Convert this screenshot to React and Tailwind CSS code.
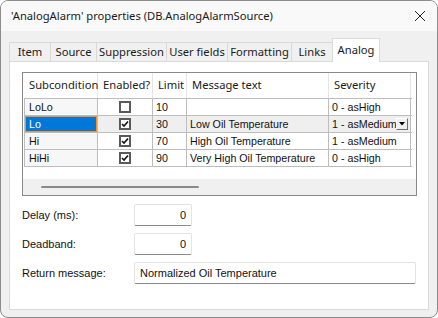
import React from 'react'

const UI = { fontFamily: '"Noto Sans", "Open Sans", sans-serif' }
const CLASSIC = { fontFamily: '"Liberation Sans", Arial, sans-serif' }

const TABS = [
  { label: 'Item', w: 'w-[41px]' },
  { label: 'Source', w: 'w-[46px]' },
  { label: 'Suppression', w: 'w-[70px]' },
  { label: 'User fields', w: 'w-[61px]' },
  { label: 'Formatting', w: 'w-[64px]' },
  { label: 'Links', w: 'w-[41px]' },
]

const COLS = [
  { key: 'sub', label: 'Subcondition', w: 'w-[74px]' },
  { key: 'en', label: 'Enabled?', w: 'w-[55px]' },
  { key: 'limit', label: 'Limit', w: 'w-[34px]' },
  { key: 'msg', label: 'Message text', w: 'w-[142px]' },
  { key: 'sev', label: 'Severity', w: 'w-[82px]' },
]

const ROWS = [
  { sub: 'LoLo', en: false, limit: '10', msg: '', sev: '0 - asHigh' },
  { sub: 'Lo', en: true, limit: '30', msg: 'Low Oil Temperature', sev: '1 - asMedium', current: true },
  { sub: 'Hi', en: true, limit: '70', msg: 'High Oil Temperature', sev: '1 - asMedium' },
  { sub: 'HiHi', en: true, limit: '90', msg: 'Very High Oil Temperature', sev: '0 - asHigh' },
]

function CheckBox({ checked }) {
  return (
    <div className="w-[12px] h-[12px] border-2 border-[#5a5a5a] bg-white flex items-center justify-center">
      {checked && (
        <svg width="8" height="8" viewBox="0 0 8 8">
          <path d="M1 4 L3 6 L7 1.5" stroke="#111" strokeWidth="1.6" fill="none" />
        </svg>
      )}
    </div>
  )
}

function Field({ label, value, wide, right }) {
  return (
    <div className="flex items-center h-[22px]">
      <div className="w-[112px] text-[11px] text-[#111]" style={CLASSIC}>{label}</div>
      <div
        className={`${wide ? 'w-[282px]' : 'w-[58px]'} h-[22px] bg-white border border-[#e3e3e3] border-b-[#8a8a8a] rounded-[2px] flex items-center px-[5px] text-[11px] text-[#111] ${right ? 'justify-end' : ''}`}
        style={CLASSIC}
      >
        {value}
      </div>
    </div>
  )
}

export default function App() {
  return (
    <div className="w-[438px] h-[318px] border border-[#8c8c8c] rounded-[8px] overflow-hidden bg-[#f0f0f0] flex flex-col">
      {/* Title bar */}
      <div className="h-[30px] bg-[#f9f9f9] flex items-center justify-between pl-[10px] pr-[10px] shrink-0" style={UI}>
        <span className="text-[11.2px] text-[#1a1a1a] whitespace-nowrap">'AnalogAlarm' properties (DB.AnalogAlarmSource)</span>
        <svg width="12" height="12" viewBox="0 0 12 12" className="mr-[1px]">
          <path d="M1 1 L11 11 M11 1 L1 11" stroke="#222" strokeWidth="1" />
        </svg>
      </div>

      {/* Tabs */}
      <div className="pl-[8px] pt-[7px] flex items-end h-[30px] shrink-0" style={UI}>
        {TABS.map(t => (
          <div
            key={t.label}
            className={`${t.w} h-[19px] border border-[#d9d9d9] border-r-0 border-b-0 bg-[#f0f0f0] flex items-center justify-center text-[11.2px] text-[#1a1a1a] whitespace-nowrap`}
          >
            {t.label}
          </div>
        ))}
        <div className="w-[48px] h-[24px] border border-[#d9d9d9] border-b-0 bg-white flex items-center justify-center text-[11.2px] text-[#1a1a1a] -mb-[1px] relative z-10">
          Analog
        </div>
      </div>

      {/* Panel */}
      <div className="ml-[8px] w-[420px] h-[249px] bg-white border border-[#d9d9d9] pl-[12px] pt-[10px]">
        {/* Grid */}
        <div className="w-[395px] h-[124px] border border-[#8a8a8a] bg-white flex flex-col">
          {/* Header */}
          <div className="flex h-[25px] pl-[1px]" style={UI}>
            {COLS.map(c => (
              <div key={c.key} className={`${c.w} border-r border-[#e5e5e5] flex items-center pl-[5px] text-[11.2px] text-[#1a1a1a] whitespace-nowrap`}>
                {c.label}
              </div>
            ))}
          </div>
          {/* Rows */}
          <div className="ml-[1px] w-[388px] border-l border-t border-[#bdbdbd]">
            {ROWS.map(r => {
              const bg = r.current ? 'bg-[#efefef]' : 'bg-white'
              return (
                <div key={r.sub} className="flex h-[17px] border-b border-[#bdbdbd] text-[10.7px] text-[#111] whitespace-nowrap" style={CLASSIC}>
                  {r.current ? (
                    <div className="w-[73px] border-r border-[#bdbdbd]">
                      <div className="h-full bg-[#0078d7] border border-[#f5922c] text-white flex items-center pl-[3px]">{r.sub}</div>
                    </div>
                  ) : (
                    <div className="w-[73px] border-r border-[#bdbdbd] bg-[#f7f7f7] flex items-center pl-[4px]">{r.sub}</div>
                  )}
                  <div className={`w-[55px] border-r border-[#bdbdbd] ${bg} flex items-center justify-center`}>
                    <CheckBox checked={r.en} />
                  </div>
                  <div className={`w-[34px] border-r border-[#bdbdbd] ${bg} flex items-center pl-[3px]`}>{r.limit}</div>
                  <div className={`w-[142px] border-r border-[#bdbdbd] ${bg} flex items-center pl-[3px]`}>{r.msg}</div>
                  <div className={`w-[82px] border-r border-[#bdbdbd] ${bg} flex items-center pl-[3px] relative overflow-hidden`}>
                    <span>{r.sev}</span>
                    {r.current && (
                      <div className="absolute right-[2px] top-[2px] w-[12px] h-[12px] bg-[#f0f0f0] border border-[#fff] border-r-[#6d6d6d] border-b-[#6d6d6d] flex items-center justify-center">
                        <svg width="6" height="4" viewBox="0 0 6 4"><path d="M0 0 H6 L3 3.5 Z" fill="#000" /></svg>
                      </div>
                    )}
                  </div>
                </div>
              )
            })}
          </div>
          <div className="flex-1" />
          {/* Horizontal scrollbar */}
          <div className="h-[16px] bg-[#f0f0f0] flex items-center pl-[18px]">
            <div className="w-[158px] h-[2px] bg-[#8a8a8a] rounded-full" />
          </div>
        </div>

        {/* Fields */}
        <div className="mt-[8px] flex flex-col gap-[7px]">
          <Field label="Delay (ms):" value="0" right />
          <Field label="Deadband:" value="0" right />
          <Field label="Return message:" value="Normalized Oil Temperature" wide />
        </div>
      </div>
    </div>
  )
}
